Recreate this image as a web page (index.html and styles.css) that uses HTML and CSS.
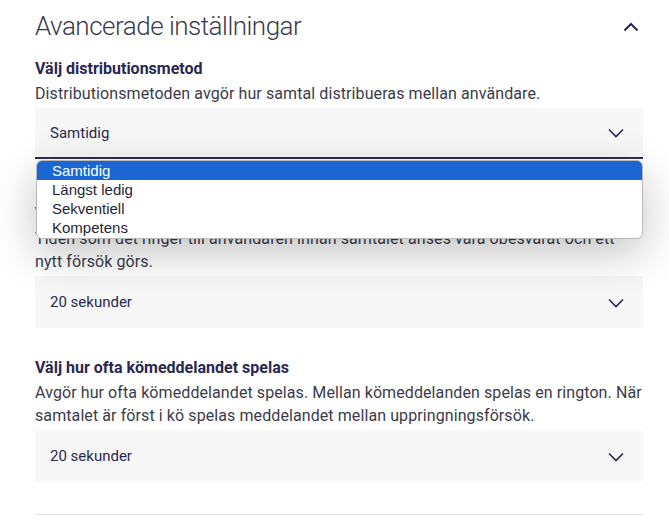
FILE: index.html
```html
<!DOCTYPE html>
<html lang="sv">
<head>
<meta charset="utf-8">
<link rel="stylesheet" href="styles.css">
</head>
<body>
<div class="panel">
  <div class="header">
    <h1 class="title">Avancerade inställningar</h1>
    <svg class="chev-up" width="16" height="10" viewBox="0 0 16 10"><path d="M1.5 8.5 L8 2 L14.5 8.5" fill="none" stroke="#27254f" stroke-width="2"/></svg>
  </div>

  <div class="field">
    <div class="label">Välj distributionsmetod</div>
    <div class="desc">Distributionsmetoden avgör hur samtal distribueras mellan användare.</div>
    <div class="select-wrap">
      <div class="select active">
        <span>Samtidig</span>
        <svg class="chev" width="16" height="10" viewBox="0 0 16 10"><path d="M1 1.5 L8 8.5 L15 1.5" fill="none" stroke="#27254f" stroke-width="1.6"/></svg>
      </div>
      <div class="menu">
        <div class="opt sel">Samtidig</div>
        <div class="opt">Längst ledig</div>
        <div class="opt">Sekventiell</div>
        <div class="opt">Kompetens</div>
      </div>
    </div>
  </div>

  <div class="field second">
    <div class="label">Välj ringtid för användare</div>
    <div class="desc">Tiden som det ringer till användaren innan samtalet anses vara obesvarat och ett nytt försök görs.</div>
    <div class="select">
      <span>20 sekunder</span>
      <svg class="chev" width="16" height="10" viewBox="0 0 16 10"><path d="M1 1.5 L8 8.5 L15 1.5" fill="none" stroke="#27254f" stroke-width="1.6"/></svg>
    </div>
  </div>

  <div class="field third">
    <div class="label">Välj hur ofta kömeddelandet spelas</div>
    <div class="desc">Avgör hur ofta kömeddelandet spelas. Mellan kömeddelanden spelas en rington. När samtalet är först i kö spelas meddelandet mellan uppringningsförsök.</div>
    <div class="select">
      <span>20 sekunder</span>
      <svg class="chev" width="16" height="10" viewBox="0 0 16 10"><path d="M1 1.5 L8 8.5 L15 1.5" fill="none" stroke="#27254f" stroke-width="1.6"/></svg>
    </div>
  </div>

  <div class="divider"></div>
</div>
</body>
</html>
```

FILE: styles.css
```css
html, body {
  margin: 0;
  padding: 0;
  background: #ffffff;
}
body {
  font-family: Roboto, "Liberation Sans", Arial, sans-serif;
  color: #2a2850;
}
.panel {
  padding: 0 26px 0 35px;
}
.header {
  display: flex;
  align-items: center;
  justify-content: space-between;
  height: 52px;
}
.title {
  margin: 0;
  font-size: 26px;
  font-weight: 300;
  color: #3a3a4c;
  letter-spacing: -0.5px;
}
.chev-up {
  margin-right: 4px;
  margin-top: 2px;
}
.field {
  display: flex;
  flex-direction: column;
}
.label {
  font-size: 16px;
  font-weight: 700;
  color: #2a2850;
  line-height: 22px;
  margin-top: 6px;
}
.desc {
  font-size: 16px;
  line-height: 23px;
  color: #3b3b4b;
  letter-spacing: 0.09px;
  margin-top: 2px;
}
.select-wrap {
  position: relative;
  margin-top: 3px;
}
.select {
  height: 52px;
  background: #f7f7f7;
  display: flex;
  align-items: center;
  justify-content: space-between;
  padding: 0 19px 0 15px;
  font-size: 15px;
  color: #2a2850;
  box-sizing: border-box;
  margin-top: 3px;
}
.select-wrap .select {
  margin-top: 0;
}
.select.active {
  height: 51px;
  border-bottom: 2px solid #2d2b52;
}
.chev {
  margin-top: 1px;
}
.menu {
  position: absolute;
  left: 1px;
  right: 0;
  top: 52px;
  background: #ffffff;
  border: 1px solid #b9b9b9;
  border-radius: 6px;
  box-shadow: 0 14px 44px rgba(0, 0, 0, 0.24);
  padding: 0 0 1px 0;
  font-family: "Liberation Sans", Arial, sans-serif;
  font-size: 15px;
  overflow: hidden;
  z-index: 5;
}
.opt {
  height: 19px;
  line-height: 19px;
  padding-left: 15px;
  color: #1f1f3a;
}
.opt.sel {
  background: #1a67d3;
  color: #ffffff;
}
.second {
  margin-top: 38px;
}
.third {
  margin-top: 23px;
}
.divider {
  height: 1px;
  background: #e3e3e6;
  margin-top: 32px;
}
```
